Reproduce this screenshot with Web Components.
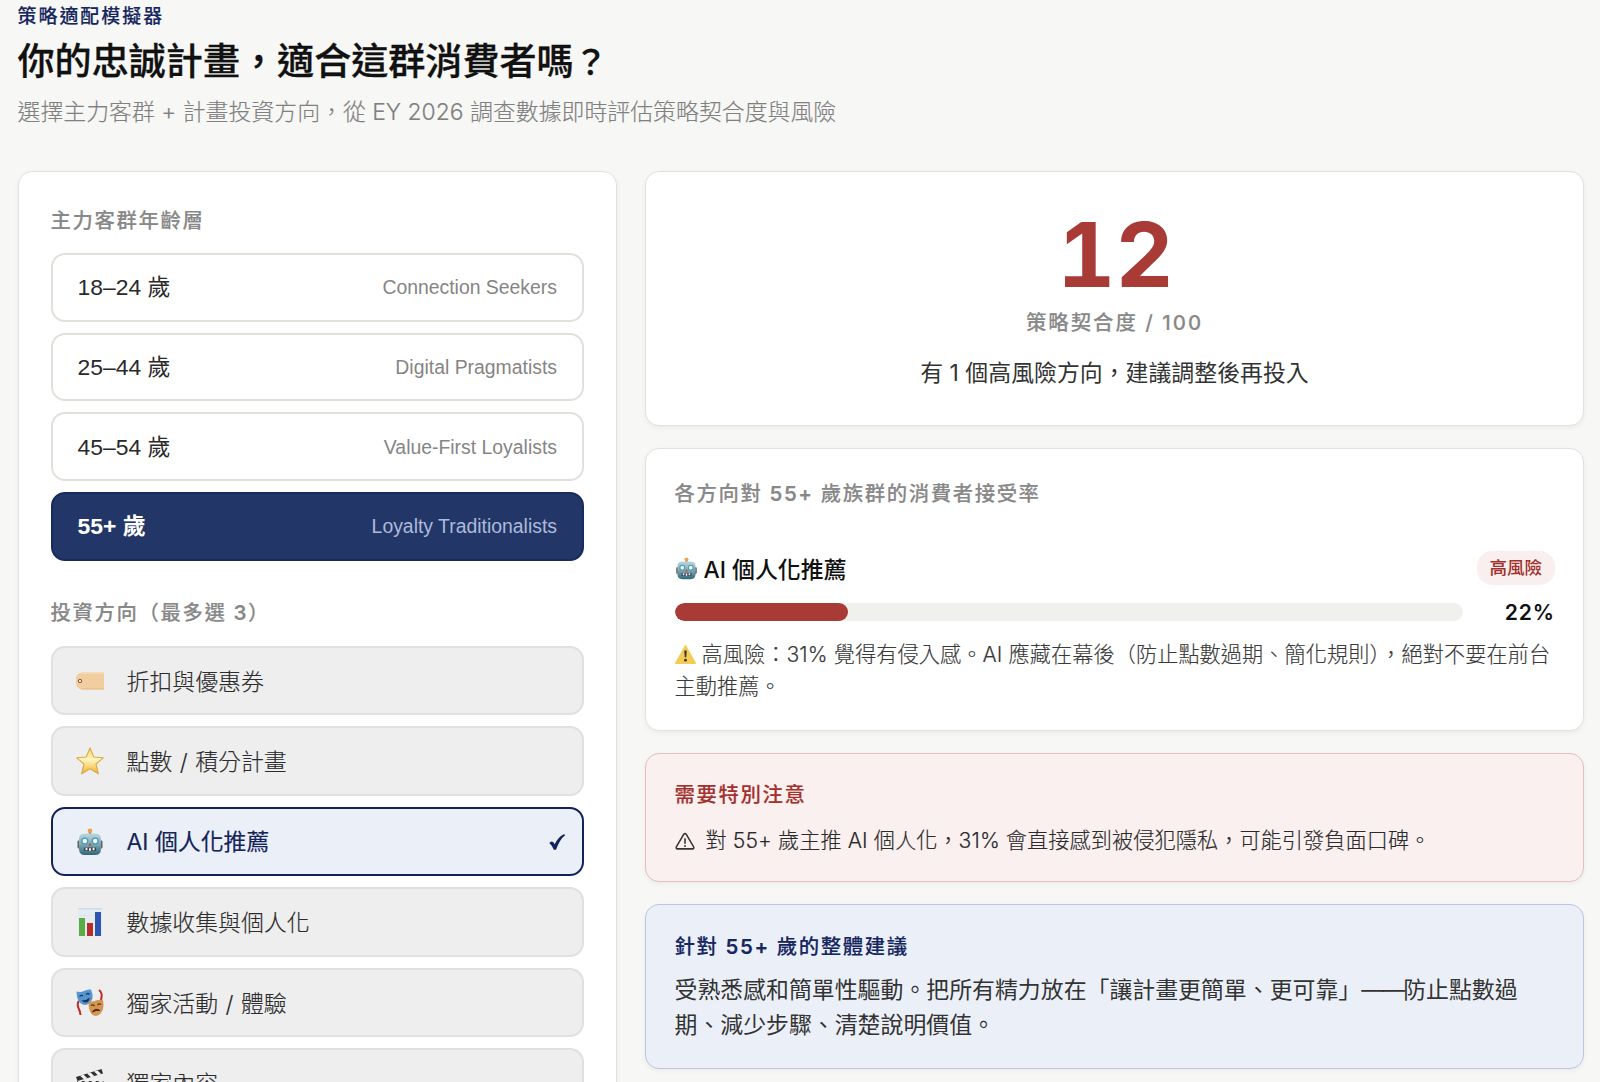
<!DOCTYPE html>
<html lang="zh-Hant">
<head>
<meta charset="utf-8">
<title>策略適配模擬器</title>
<style>
    html, body {
        margin: 0;
        height: 1082px;
        overflow: hidden;
        background: #f7f7f5;
    }
</style>
</head>
<body>
<strategy-simulator></strategy-simulator>

<script>
const ICONS = {
    tag: `
        <path d="M6 5.500H28V22.500H6Q1 22 0 17V11Q1 6 6 5.500Z" fill="#f2cd9f"/>
        <path d="M6 5.500H28V7H4Z" fill="#f6d6ae"/>
        <path d="M4 21H28V22.500H6Z" fill="#e9c093"/>
        <circle cx="4" cy="14" r="1.7" fill="#f7e8d2" stroke="#7c5a3e" stroke-width="1"/>`,
    star: `
        <defs><linearGradient id="s" x2="0" y2="1"><stop offset="0" stop-color="#f9d568"/><stop offset=".45" stop-color="#fff6bc"/><stop offset="1" stop-color="#f0b02e"/></linearGradient></defs>
        <path d="M14 1L17.800 10L27.300 10.800L20 17L22.400 26.800L14 21.800L5.600 26.800L8 17L.7 10.800L10.200 10Z" fill="url(#s)" stroke="#d9a94e" stroke-width="1.1" stroke-linejoin="round"/>`,
    robot: `
        <defs><linearGradient id="r" x2="0" y2="1"><stop offset="0" stop-color="#bcd9e0"/><stop offset=".5" stop-color="#7fa9b6"/><stop offset="1" stop-color="#2f6676"/></linearGradient></defs>
        <path d="M12.8 3h2.4v4h-2.4z" fill="#8a6a60"/>
        <circle cx="14" cy="2.800" r="2.300" fill="#eda24e"/>
        <rect x="1.500" y="12.5" width="3" height="8" rx="1" fill="#6d5c60"/>
        <rect x="23.500" y="12.5" width="3" height="8" rx="1" fill="#6d5c60"/>
        <path d="M8 5.500H20Q25 6 25 11V21Q25 27 19 27H9Q3 27 3 21V11Q3 6 8 5.500Z" fill="url(#r)"/>
        <circle cx="8.800" cy="13" r="2.900" fill="#eaffff" stroke="#4e97b5" stroke-width="1.3"/>
        <circle cx="19.200" cy="13" r="2.900" fill="#eaffff" stroke="#4e97b5" stroke-width="1.3"/>
        <path d="M14 14.500l1.900 3.300h-3.800z" fill="#b15a4c"/>
        <rect x="8" y="19.500" width="12" height="3.6" rx="1" fill="#3b4146"/>
        <path d="M9.500 19.800h1.900v2.400H9.500zM13 20.200h2v2.600h-2zM16.600 19.800h1.900v2.400h-1.900z" fill="#f2f4f3"/>`,
    chart: `
        <rect x="2" y="0" width="24" height="28" fill="#e6ebf2"/>
        <path d="M2 0H26V1.500H2Z" fill="#d0dae6"/>
        <path d="M2 7.5h24M2 14h24M2 20.500h24" stroke="#d8e2ee" stroke-width=".8"/>
        <path d="M3 10h6v18H3z" fill="#58ad43"/>
        <path d="M11 15h6v13H11z" fill="#b62e2a"/>
        <path d="M19 4h6v24H19z" fill="#2b55b0"/>`,
    masks: `
        <path d="M23 1Q26.500 4 25.500 8T26 14" fill="none" stroke="#bd2c2b" stroke-width="2"/>
        <path d="M2.500 12Q1 16 2.500 19T4.500 26" fill="none" stroke="#bd2c2b" stroke-width="2"/>
        <path d="M.5 2.500Q5 3.500 8 2Q11 0 15 .5Q17 5 16.500 9Q15.500 14 10 16Q5 16 2.500 12Q.5 8 .5 2.500Z" fill="#5795cf"/>
        <path d="M3.500 7.500q2-2 3.500-.5M10 5.500q2-2 3.500 0" fill="none" stroke="#1c3d6d" stroke-width="1.300"/>
        <path d="M5.500 11Q10 12 13.500 8.500Q13.500 13 10 13.500Q7 13.500 5.500 11Z" fill="#15355f"/>
        <path d="M13 12Q17 13 20 11.500Q23 10.500 27 11Q28 16 27 20Q25 26 20 27Q15 26.500 13.500 21Q12 17 13 12Z" fill="#d3954f"/>
        <path d="M15 16.500q2-1.500 3.500.5M21.500 16q2-2 3.500-.5" fill="none" stroke="#60351c" stroke-width="1.300"/>
        <path d="M16.500 23Q19 18.500 24 21.500Q20 20.500 16.500 23Z" fill="#512713" stroke="#512713"/>`,
    clapper: `
        <path d="M0 8L25.500 0L27 4.500L1.500 12Z" fill="#303030"/>
        <path d="M4 6.800l4 3.500l3.500-1L7.500 5.700zM11 4.600l4 3.600 3.500-1-4-3.700zM18 2.500l4 3.700 3.500-1-4-3.700z" fill="#f4f4f4"/>
        <rect x="1" y="12" width="26.500" height="16" fill="#363636"/>
        <path d="M2 12h4l-2 4H1zM9 12h4l-2 4H7zM16 12h4l-2 4h-4zM23 12h4l-2 4h-4z" fill="#ededed"/>`,
    warning: `
        <path d="M14 2.500L27 25.500H1Z" fill="#f3cc55" stroke="#f3cc55" stroke-width="2" stroke-linejoin="round"/>
        <path d="M12.400 8.500h3.200l-.6 9h-2z" fill="#35312a"/>
        <circle cx="14" cy="21.500" r="1.800" fill="#35312a"/>`,
    alert: `
        <path d="M14 3.500Q15 3.500 16 5L26 22Q27 25 24.500 25H3.500Q1 25 2 22L12 5Q13 3.500 14 3.500Z" fill="none" stroke="#333" stroke-width="2.200"/>
        <path d="M14 10v8" stroke="#333" stroke-width="2.200"/>
        <circle cx="14" cy="21" r="1.300" fill="#333"/>`,
    check: `
        <path d="M2 15.500Q5 11.500 8 14L10.500 17.500Q15 7 24.500 2L27 3Q18 10 12.500 26H9Q7 20 2 15.500Z" fill="#14245a"/>`
};

class PictoIcon extends HTMLElement {

    constructor() {
        super();
        this.attachShadow({ mode: "open" });
    }

    connectedCallback() {
        this.shadowRoot.innerHTML = `
            <style>
                :host { display: inline-block; flex: none; width: 28px; height: 28px; }
                svg { display: block; width: 100%; height: 100%; overflow: visible; }
            </style>
            <svg viewBox="0 0 28 28" aria-hidden="true">${ICONS[this.getAttribute("name")] || ""}</svg>
        `;
    }
}

class PanelCard extends HTMLElement {

    constructor() {
        super();
        this.attachShadow({ mode: "open" });
        this.shadowRoot.innerHTML = `
            <style>
                :host {
                    display: block;
                    box-sizing: border-box;
                    border: 1px solid #e1e1dd;
                    border-radius: 14px;
                    background: #fff;
                    box-shadow: 0 2px 5px rgba(0, 0, 0, .05);
                }
                :host([tone="danger"]) { background: #f9f0ef; border-color: #e3bfbf; }
                :host([tone="info"]) { background: #ebf0f8; border-color: #bcc6de; }
            </style>
            <slot></slot>
        `;
    }
}

class SectionLabel extends HTMLElement {

    constructor() {
        super();
        this.attachShadow({ mode: "open" });
        this.shadowRoot.innerHTML = `
            <style>
                :host {
                    display: block;
                    font-size: 20.4px;
                    line-height: 32px;
                    font-weight: 500;
                    letter-spacing: 1.6px;
                    white-space: nowrap;
                    color: #888;
                    -webkit-text-stroke: .15px currentColor;
                }
                ::slotted(b) { font-weight: 600; }
            </style>
            <slot></slot>
        `;
    }
}

//One age segment: the age range on the left, the segment name on the right
class AgeOption extends HTMLElement {

    constructor() {
        super();
        this.attachShadow({ mode: "open" });
        this.shadowRoot.innerHTML = `
            <style>
                :host {
                    display: flex;
                    align-items: center;
                    justify-content: space-between;
                    box-sizing: border-box;
                    height: 68.700px;
                    padding: 0 25px;
                    border: 2px solid #e1e1dc;
                    border-radius: 14px;
                    background: #fff;
                    font: 22.9px/34px "Liberation Sans", "Noto Sans CJK TC", sans-serif;
                    color: #2a2a2a;
                    white-space: nowrap;
                }
                .name { font-size: 19.4px; color: #858585; }
                :host([selected]) {
                    background: #223767;
                    border-color: #182b5c;
                    color: #fff;
                    font-weight: 700;
                }
                :host([selected]) .name { color: #adbadb; font-weight: 400; }
            </style>
            <span><slot></slot></span>
            <span class="name"><slot name="name"></slot></span>
        `;
    }
}

class InvestOption extends HTMLElement {

    constructor() {
        super();
        this.attachShadow({ mode: "open" });
    }

    connectedCallback() {
        const check = this.hasAttribute("selected") ? `<picto-icon class="check" name="check"></picto-icon>` : "";
        this.shadowRoot.innerHTML = `
            <style>
                :host {
                    display: flex;
                    align-items: center;
                    box-sizing: border-box;
                    height: 69.500px;
                    padding: 0 16px 0 23.500px;
                    border: 2px solid #e0e0dc;
                    border-radius: 14px;
                    background: #eee;
                    font-size: 22.9px;
                    line-height: 34px;
                    font-weight: 300;
                    word-spacing: 1px;
                    color: #2c2c2c;
                    white-space: nowrap;
                    -webkit-text-stroke: .15px currentColor;
                }
                :host([selected]) {
                    background: #ebf0f8;
                    border-color: #12235a;
                    color: #14245a;
                    font-weight: 400;
                    word-spacing: 0;
                }
                .text { flex: 1; margin-left: 22.500px; padding-top: 2px; }
                :host([selected]) .text { padding-top: 1px; }
                .check { width: 18px; height: 18px; }
            </style>
            <picto-icon name="${this.getAttribute("icon")}"></picto-icon>
            <span class="text"><slot></slot></span>
            ${check}
        `;
    }
}

class ScoreDisplay extends HTMLElement {

    constructor() {
        super();
        this.attachShadow({ mode: "open" });
        this.shadowRoot.innerHTML = `
            <style>
                :host {
                    display: flex;
                    flex-direction: column;
                    align-items: center;
                    padding-top: 37px;
                    height: 216px;
                    white-space: nowrap;
                }
                .score {
                    font-size: 90px;
                    line-height: 92px;
                    font-weight: 700;
                    font-variant-numeric: tabular-nums;
                    padding-left: 2px;
                    color: #a93b37;
                }
                .unit {
                    margin-top: 6px;
                    font-size: 20.4px;
                    line-height: 32px;
                    font-weight: 500;
                    letter-spacing: 2px;
                    color: #888;
                    -webkit-text-stroke: .15px currentColor;
                }
                .message {
                    margin-top: 16px;
                    font-size: 22.9px;
                    line-height: 36px;
                    color: #333;
                }
            </style>
            <div class="score"><slot name="score"></slot></div>
            <div class="unit"><slot name="unit"></slot></div>
            <div class="message"><slot></slot></div>
        `;
    }
}

class AcceptanceItem extends HTMLElement {

    constructor() {
        super();
        this.attachShadow({ mode: "open" });
    }

    connectedCallback() {
        const rate = this.getAttribute("rate");
        this.shadowRoot.innerHTML = `
            <style>
                :host { display: block; white-space: nowrap; }
                .head, .meter { display: flex; align-items: center; }
                .head { height: 34px; }
                .head picto-icon { width: 23px; height: 23px; }
                .title {
                    flex: 1;
                    margin-left: 6px;
                    font-size: 22.9px;
                    font-weight: 500;
                    color: #111;
                }
                .badge {
                    padding: 0 12.300px;
                    border-radius: 15px;
                    background: #f9efee;
                    color: #a3312d;
                    font-size: 17.600px;
                    line-height: 34px;
                    font-weight: 500;
                }
                .meter { margin-top: 11px; height: 32px; }
                .track { flex: 1; height: 17.600px; border-radius: 9px; background: #f0f0ec; overflow: hidden; }
                .fill { width: ${rate}%; height: 100%; border-radius: 9px; background: #a93b37; }
                .rate {
                    width: 92px;
                    text-align: right;
                    font-size: 21.150px;
                    font-weight: 600;
                    font-variant-numeric: tabular-nums;
                    letter-spacing: .5px;
                    color: #111;
                }
                .note {
                    margin-top: 11px;
                    font-size: 21.150px;
                    line-height: 32px;
                    font-weight: 300;
                    letter-spacing: .1px;
                    color: #3a3a3a;
                    -webkit-text-stroke: .15px currentColor;
                }
                .note picto-icon { width: 21px; height: 21px; margin-right: 6px; vertical-align: -3px; }
            </style>
            <div class="head">
                <picto-icon name="robot"></picto-icon>
                <span class="title"><slot name="title"></slot></span>
                <span class="badge"><slot name="badge"></slot></span>
            </div>
            <div class="meter">
                <div class="track"><div class="fill"></div></div>
                <span class="rate">${rate}%</span>
            </div>
            <div class="note"><picto-icon name="warning"></picto-icon><slot></slot></div>
        `;
    }
}

class StrategySimulator extends HTMLElement {

    constructor() {
        super();
        this.attachShadow({ mode: "open" });
        this.shadowRoot.innerHTML = this._getTemplate();
    }

    _getTemplate() {
        return `
            ${this._getStyles()}
            <header>
                <div class="eyebrow">策略適配模擬器</div>
                <h1>你的忠誠計畫，適合這群消費者嗎<span class="mark">？</span></h1>
                <p class="sub">選擇主力客群 + 計畫投資方向，從 EY 2026 調查數據即時評估策略契合度與風險</p>
            </header>
            <main>
                <panel-card class="controls">
                    <section-label>主力客群年齡層</section-label>
                    <div class="options">
                        <age-option>18–24 歲<span slot="name">Connection Seekers</span></age-option>
                        <age-option>25–44 歲<span slot="name">Digital Pragmatists</span></age-option>
                        <age-option>45–54 歲<span slot="name">Value-First Loyalists</span></age-option>
                        <age-option selected>55+ 歲<span slot="name">Loyalty Traditionalists</span></age-option>
                    </div>
                    <section-label class="second">投資方向（最多選 <b>3</b>）</section-label>
                    <div class="options">
                        <invest-option icon="tag">折扣與優惠券</invest-option>
                        <invest-option icon="star">點數 / 積分計畫</invest-option>
                        <invest-option icon="robot" selected>AI 個人化推薦</invest-option>
                        <invest-option icon="chart">數據收集與個人化</invest-option>
                        <invest-option icon="masks">獨家活動 / 體驗</invest-option>
                        <invest-option icon="clapper">獨家內容</invest-option>
                    </div>
                </panel-card>
                <div class="results">
                    <panel-card>
                        <score-display>
                            <span slot="score">12</span>
                            <span slot="unit">策略契合度 / 100</span>
                            有 1 個高風險方向，建議調整後再投入
                        </score-display>
                    </panel-card>
                    <panel-card class="rates">
                        <section-label>各方向對 <b>55+</b> 歲族群的消費者接受率</section-label>
                        <acceptance-item rate="22"><span slot="title">AI 個人化推薦</span><span slot="badge">高風險</span>高風險：31% 覺得有侵入感。AI 應藏在幕後（防止點數過期、簡化規則），絕對不要在前台<br>主動推薦。</acceptance-item>
                    </panel-card>
                    <panel-card class="risk" tone="danger">
                        <section-label>需要特別注意</section-label>
                        <div class="warn"><picto-icon name="alert"></picto-icon><span>對 55+ 歲主推 AI 個人化，31% 會直接感到被侵犯隱私，可能引發負面口碑。</span></div>
                    </panel-card>
                    <panel-card class="advice" tone="info">
                        <section-label>針對 <b>55+</b> 歲的整體建議</section-label>
                        <div class="text">受熟悉感和簡單性驅動。把所有精力放在「讓計畫更簡單、更可靠」<span class="dash">——</span>防止點數過<br>期、減少步驟、清楚說明價值。</div>
                    </panel-card>
                </div>
            </main>
        `;
    }

    _getStyles() {
        return `
            <style>
                :host {
                    display: block;
                    padding: 0 16px 0 17.500px;
                    font-family: Inter, "Noto Sans CJK TC", sans-serif;
                    white-space: nowrap;
                }
                .eyebrow {
                    padding-top: 1px;
                    font-size: 18.900px;
                    line-height: 32px;
                    font-weight: 500;
                    letter-spacing: 2.050px;
                    color: #16265e;
                    -webkit-text-stroke: .15px currentColor;
                }
                h1 {
                    height: 50px;
                    margin: 4px 0 7px;
                    font-size: 37.100px;
                    line-height: 50px;
                    font-weight: 500;
                    color: #111;
                    -webkit-text-stroke: .3px currentColor;
                }
                .mark { font-size: 34px; }
                .sub {
                    margin: 0;
                    font-size: 22.9px;
                    line-height: 36px;
                    font-weight: 300;
                    color: #808080;
                    -webkit-text-stroke: .15px currentColor;
                }
                main { display: flex; gap: 28px; margin-top: 41px; align-items: flex-start; }
                .controls {
                    box-sizing: border-box;
                    width: 599.500px;
                    flex: none;
                    padding: 33px 32px 40px;
                }
                .options { display: flex; flex-direction: column; gap: 11px; margin-top: 16px; }
                .second { margin-top: 36px; }
                .second + .options { margin-top: 17px; }
                .results { flex: 1; display: flex; flex-direction: column; gap: 22px; }
                .rates { height: 283px; padding: 29px 28.500px 0; }
                acceptance-item { margin-top: 41px; }
                .risk { height: 129px; padding: 25px 28.500px 0; }
                .risk section-label { color: #a3312d; }
                .warn {
                    display: flex;
                    align-items: center;
                    margin-top: 14px;
                    font-size: 21.150px;
                    line-height: 32px;
                    font-weight: 300;
                    letter-spacing: .09px;
                    color: #2a2a2a;
                    -webkit-text-stroke: .15px currentColor;
                }
                .warn picto-icon { width: 20px; height: 20px; margin-right: 11px; }
                .advice { height: 165px; padding: 26px 28.500px 0; margin-top: -.5px; }
                .advice section-label { color: #16265e; }
                .text { margin-top: 10px; font-size: 22.9px; line-height: 35.500px; color: #333; }
                .dash { letter-spacing: -1.900px; }
            </style>
        `;
    }
}

customElements.define("picto-icon", PictoIcon);
customElements.define("panel-card", PanelCard);
customElements.define("section-label", SectionLabel);
customElements.define("age-option", AgeOption);
customElements.define("invest-option", InvestOption);
customElements.define("score-display", ScoreDisplay);
customElements.define("acceptance-item", AcceptanceItem);
customElements.define("strategy-simulator", StrategySimulator);
</script>
</body>
</html>
